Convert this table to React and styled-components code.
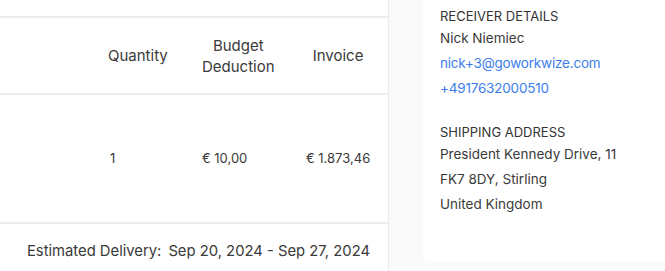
import React from 'react'
import styled, { createGlobalStyle } from 'styled-components'

const GlobalStyle = createGlobalStyle`
  html, body {
    margin: 0;
    padding: 0;
    background: #fafafa;
    font-family: Inter, "Noto Sans", sans-serif;
    color: #333;
  }
`

const Page = styled.div`
  display: flex;
  width: 665px;
  height: 271px;
  overflow: hidden;
  background: #fafafa;
`

const OrderPanel = styled.section`
  width: 388px;
  flex-shrink: 0;
  background: #fff;
  border-right: 1px solid #ececec;
  padding-top: 16px;
  display: flex;
  flex-direction: column;
`

const Row = styled.div`
  display: grid;
  grid-template-columns: 1fr 94px 104px 64px;
  padding-right: 18px;
  align-items: center;
  height: ${p => p.$h}px;
  border-top: 2px solid #ededed;
  font-size: ${p => p.$size}px;
  color: #3a3a3a;
  white-space: nowrap;
`

const Cell = styled.div`
  text-align: ${p => p.$align || 'left'};
  line-height: 21px;
  padding-left: ${p => p.$pl || 0}px;
`

const Stacked = styled.div`
  display: inline-block;
  text-align: center;
`

const Footer = styled.div`
  border-top: 2px solid #ededed;
  padding: 18px 18px 0 0;
  text-align: right;
  font-size: 14.8px;
  color: #3a3a3a;
`

const Gap = styled.span`
  display: inline-block;
  width: 7px;
`

const Card = styled.aside`
  margin-left: 34px;
  flex: 1;
  height: 261px;
  background: #fff;
  border-radius: 0 0 0 5px;
  padding: 7px 0 0 17px;
  box-sizing: border-box;
`

const Group = styled.div`
  margin-bottom: 22px;
`

const Label = styled.div`
  font-size: 13px;
  line-height: 19px;
  color: #333;
  text-transform: uppercase;
`

const Line = styled.div`
  font-size: 13.5px;
  line-height: 25px;
  color: ${p => (p.$link ? '#3b7ded' : '#3a3a3a')};
  letter-spacing: ${p => (p.$link ? '-0.2px' : '0')};
`

export default function App() {
  return (
    <>
      <GlobalStyle />
      <Page>
        <OrderPanel>
          <Row $h={75} $size={15}>
            <Cell />
            <Cell>Quantity</Cell>
            <Cell>
              <Stacked>
                Budget
                <br />
                Deduction
              </Stacked>
            </Cell>
            <Cell $align="center">Invoice</Cell>
          </Row>
          <Row $h={127} $size={13}>
            <Cell />
            <Cell $pl={2}>1</Cell>
            <Cell>€ 10,00</Cell>
            <Cell>€ 1.873,46</Cell>
          </Row>
          <Footer>
            Estimated Delivery:<Gap />Sep 20, 2024 - Sep 27, 2024
          </Footer>
        </OrderPanel>
        <Card>
          <Group>
            <Label>Receiver Details</Label>
            <Line>Nick Niemiec</Line>
            <Line $link>nick+3@goworkwize.com</Line>
            <Line $link>+4917632000510</Line>
          </Group>
          <Group>
            <Label>Shipping Address</Label>
            <Line>President Kennedy Drive, 11</Line>
            <Line>FK7 8DY, Stirling</Line>
            <Line>United Kingdom</Line>
          </Group>
        </Card>
      </Page>
    </>
  )
}
